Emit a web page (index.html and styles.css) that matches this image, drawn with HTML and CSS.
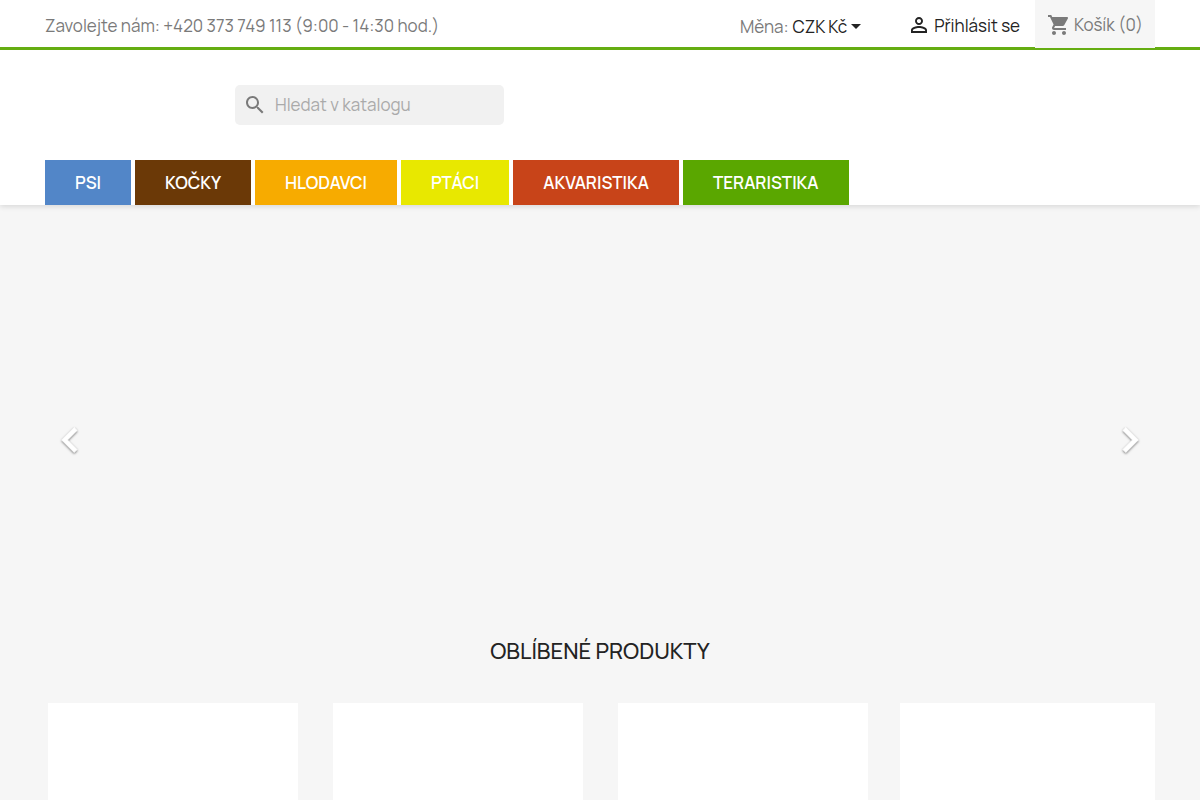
FILE: index.html
```html
<!DOCTYPE html>
<html lang="cs">
<head>
    <meta charset="utf-8">
    <title>Chovatelské potřeby</title>
    <meta name="viewport" content="width=device-width, initial-scale=1">
    <link rel="stylesheet" href="styles.css">
</head>
<body>
<header id="header">
    <div class="header-nav">
        <div class="container">
            <div class="contact">Zavolejte nám: +420 373 749 113 (9:00 - 14:30 hod.)</div>
            <div class="right-nav">
                <div class="currency">
                    <span>Měna:</span>
                    <button type="button">CZK Kč <span class="caret"></span></button>
                </div>
                <a class="login" href="#">
                    <svg class="icon" viewBox="0 0 24 24"><path d="M12 5.9c1.16 0 2.1.94 2.1 2.1s-.94 2.1-2.1 2.1S9.9 9.16 9.9 8s.94-2.1 2.1-2.1m0 9c2.97 0 6.1 1.46 6.1 2.1v1.1H5.9V17c0-.64 3.13-2.1 6.1-2.1M12 4C9.79 4 8 5.79 8 8s1.79 4 4 4 4-1.79 4-4-1.79-4-4-4zm0 9c-2.67 0-8 1.34-8 4v3h16v-3c0-2.66-5.33-4-8-4z"/></svg>
                    <span>Přihlásit se</span>
                </a>
                <div class="cart">
                    <svg class="icon" viewBox="0 0 24 24"><path d="M7 18c-1.100 0-1.990.9-1.990 2S5.900 22 7 22s2-.9 2-2-.9-2-2-2zM1 2v2h2l3.600 7.590-1.350 2.450c-.16.28-.25.61-.25.960 0 1.100.9 2 2 2h12v-2H7.420c-.14 0-.25-.11-.25-.25l.03-.12.900-1.630h7.450c.75 0 1.410-.41 1.750-1.030l3.580-6.490c.08-.14.120-.31.120-.48 0-.55-.45-1-1-1H5.210l-.94-2H1zm16 16c-1.100 0-1.990.9-1.990 2s.89 2 1.990 2 2-.9 2-2-.9-2-2-2z"/></svg>
                    <span>Košík (0)</span>
                </div>
            </div>
        </div>
    </div>
    <div class="header-top">
        <div class="container">
            <form class="search">
                <svg class="icon" viewBox="0 0 24 24"><path d="M15.500 14h-.79l-.28-.27C15.410 12.590 16 11.110 16 9.500 16 5.910 13.090 3 9.500 3S3 5.910 3 9.500 5.910 16 9.500 16c1.610 0 3.090-.59 4.230-1.570l.27.280v.79l5 4.990L20.490 19l-4.990-5zm-6 0C7.010 14 5 11.990 5 9.500S7.010 5 9.500 5 14 7.010 14 9.500 11.990 14 9.500 14z"/></svg>
                <input type="text" placeholder="Hledat v katalogu" aria-label="Hledat v katalogu">
            </form>
            <nav class="menu">
                <a class="psi" href="#">PSI</a>
                <a class="kocky" href="#">KOČKY</a>
                <a class="hlodavci" href="#">HLODAVCI</a>
                <a class="ptaci" href="#">PTÁCI</a>
                <a class="akvaristika" href="#">AKVARISTIKA</a>
                <a class="teraristika" href="#">TERARISTIKA</a>
            </nav>
        </div>
    </div>
</header>

<main class="container">
    <section class="carousel">
        <button type="button" aria-label="Předchozí">
            <svg viewBox="0 0 24 24"><path d="M15.410 7.410L14 6l-6 6 6 6 1.410-1.410L10.830 12z"/></svg>
        </button>
        <button type="button" aria-label="Další">
            <svg viewBox="0 0 24 24"><path d="M10 6L8.590 7.410 13.170 12l-4.580 4.590L10 18l6-6z"/></svg>
        </button>
    </section>
    <section class="featured">
        <h2>OBLÍBENÉ PRODUKTY</h2>
        <div class="products">
            <article class="product"></article>
            <article class="product"></article>
            <article class="product"></article>
            <article class="product"></article>
        </div>
    </section>
</main>
</body>
</html>
```
FILE: styles.css
```css
* {
    box-sizing: border-box;
}

body {
    margin: 0;
    background: #f6f6f6;
    color: #232323;
    font-family: Manrope, Inter, sans-serif;
    font-size: 17px;
    line-height: 20px;
}

a {
    color: #232323;
    text-decoration: none;
}

button {
    padding: 0;
    border: 0;
    background: none;
    color: inherit;
    font: inherit;
    cursor: pointer;
}

.container {
    max-width: 1140px;
    margin: 0 auto;
    padding: 0 15px;
}

.icon {
    flex: none;
    width: 24px;
    height: 24px;
    fill: currentColor;
}

#header {
    background: #fff;
    box-shadow: 0 2px 5px 0 rgba(0, 0, 0, 0.11);
}

/* top bar */
.header-nav {
    height: 50px;
    border-bottom: 3px solid #65ad12;
    color: #7a7a7a;
}

.header-nav .container,
.right-nav {
    display: flex;
    align-items: center;
    justify-content: space-between;
}

.contact {
    padding-top: 3px;
}

.currency {
    display: flex;
    gap: 4px;
    padding-top: 5px;
    margin-right: 46px;
}

.currency button {
    display: flex;
    align-items: center;
    gap: 4px;
    color: #232323;
}

.caret {
    border: 5px solid transparent;
    border-top-color: #232323;
    border-bottom: 0;
}

.login {
    display: flex;
    align-items: center;
    gap: 3px;
    padding-top: 4px;
    margin-right: 15px;
}

.login .icon {
    margin-bottom: 3px;
}

.cart {
    display: flex;
    align-items: center;
    gap: 3px;
    height: 48px;
    padding: 1px 12px 0;
    background: #f6f6f6;
}

/* search and menu */
.header-top {
    padding-top: 35px;
}

.search {
    display: flex;
    align-items: center;
    gap: 8px;
    width: 269px;
    height: 40px;
    margin: 0 0 35px 190px;
    padding: 0 8px;
    border-radius: 5px;
    background: #f1f1f1;
    color: #7a7a7a;
}

.search input {
    flex: 1;
    min-width: 0;
    padding: 0;
    border: 0;
    outline: 0;
    background: none;
    color: #7a7a7a;
    font: inherit;
}

.search input::placeholder {
    color: #aaa;
}

.menu {
    display: flex;
    gap: 4px;
}

.menu a {
    padding: 13px 30px 12px;
    color: #fff;
    font-weight: 600;
}

.psi { background: #5286c8; }
.kocky { background: #6b3907; }
.hlodavci { background: #f7ab00; }
.ptaci { background: #e8e800; }
.akvaristika { background: #c84419; }
.teraristika { background: #5aa700; }

/* carousel */
.carousel {
    display: flex;
    align-items: center;
    justify-content: space-between;
    height: 410px;
    padding-top: 60px;
}

.carousel svg {
    display: block;
    width: 50px;
    height: 50px;
    fill: #fff;
    stroke: #fff;
    stroke-width: 0.4;
    filter: drop-shadow(0 1px 1px rgba(0, 0, 0, 0.5));
}

/* products */
.featured h2 {
    margin: 20px 0 36px;
    font-size: 22px;
    font-weight: 500;
    line-height: 32px;
    text-align: center;
}

.products {
    display: grid;
    grid-template-columns: repeat(4, 1fr);
    gap: 30px;
}

.product {
    height: 320px;
    margin: 0 2px 0 3px;
    background: #fff;
}

.product:last-child {
    margin: 0;
}
```
